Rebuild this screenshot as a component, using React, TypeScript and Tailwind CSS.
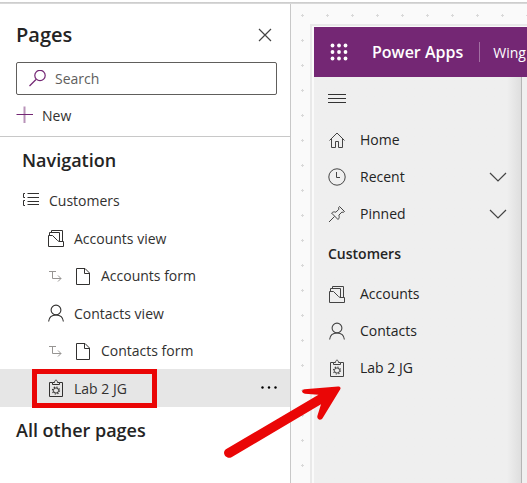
import type { ReactNode } from 'react';

type IconProps = { className?: string };

function Svg({ children, className = '', size = 18 }: { children: ReactNode; className?: string; size?: number }) {
  return (
    <svg
      aria-hidden="true"
      width={size}
      height={size}
      viewBox={`0 0 ${size} ${size}`}
      fill="none"
      stroke="currentColor"
      className={`shrink-0 ${className}`}
    >
      {children}
    </svg>
  );
}

const AccountsIcon = ({ className }: IconProps) => (
  <Svg className={className}>
    <path d="M1.500 17.500V6.500H5.500L10.500 11.500L12 12.500H16.500V17.500Z" />
    <path d="M2.500 6V3.500H12.500V12M4.500 3V1.500H15.500V12" />
  </Svg>
);

const ContactIcon = ({ className }: IconProps) => (
  <Svg className={className}>
    <circle cx="9" cy="6" r="4.9" strokeWidth="1.1" />
    <path d="M1.6 17.5C2 13.5 4.6 11 9 11s7 2.500 7.400 6.500" strokeWidth="1.1" />
  </Svg>
);

const ClipboardIcon = ({ className }: IconProps) => (
  <Svg className={className}>
    <path d="M5.500 3.500H2.500v14h13v-14h-3" />
    <path d="M5.500 3.500v2h7v-2h-2C10.500.4 7.500.4 7.500 3.500Z" />
    <circle cx="9" cy="11.500" r="2.600" />
    <circle cx="9" cy="11.500" r="3.500" strokeWidth="1.200" strokeDasharray="1.200 1.550" />
  </Svg>
);

const PageIcon = ({ className }: IconProps) => (
  <Svg className={className}>
    <path d="M2.500 1.500H11L15.500 6v11.500H2.500Z" />
    <path d="M10.500 1.500V6.500H15.500" />
  </Svg>
);

const BranchIcon = ({ className }: IconProps) => (
  <Svg className={className}>
    <path d="M2 4.500H9M5.500 4.500v7H14M11 8.500l3 3-3 3" />
  </Svg>
);

const GroupIcon = ({ className }: IconProps) => (
  <Svg className={className}>
    <path d="M3 2.500H1.500V6.500H3M3 9.500H1.500V14.500H3M5.500 2.500H17M5.500 6.500H17M5.500 10.500H17M5.500 13.500H17" />
  </Svg>
);

const HomeIcon = ({ className }: IconProps) => (
  <Svg className={className}>
    <path d="M1.500 9.500L9 2l7.500 7.500M3.500 8v8.500h4v-6h3v6h4V8" />
  </Svg>
);

const ClockIcon = ({ className }: IconProps) => (
  <Svg className={className}>
    <circle cx="9" cy="9" r="8.200" />
    <path d="M8.500 4v5.500H12" />
  </Svg>
);

const PinIcon = ({ className }: IconProps) => (
  <Svg className={className}>
    <path d="M11.500 1.500l5 5-1.200.8-1.400-.2-3 3c.6 2 .3 3.200-.9 4.400L3.600 8.100c1.200-1.200 2.400-1.500 4.300-.9l3-3-.3-1.500ZM6.500 11.500L1 17" />
  </Svg>
);

const ChevronIcon = ({ className }: IconProps) => (
  <Svg className={className}>
    <path d="M1 5l8 8 8-8" strokeWidth="1.200" />
  </Svg>
);

type TreeRow = { label: string; kind: 'view' | 'form'; Icon: (p: IconProps) => ReactNode };

const tree: TreeRow[] = [
  { label: 'Accounts view', kind: 'view', Icon: AccountsIcon },
  { label: 'Accounts form', kind: 'form', Icon: PageIcon },
  { label: 'Contacts view', kind: 'view', Icon: ContactIcon },
  { label: 'Contacts form', kind: 'form', Icon: PageIcon },
];

function PagesPanel() {
  return (
    <aside className="flex w-[291px] shrink-0 flex-col border-r border-[#c8c8c8] bg-white text-[#323130]">
      <header className="flex items-center justify-between pt-4 pr-4 pl-4">
        <h1 className="text-[20px] leading-[30px] font-semibold text-[#242424]">Pages</h1>
        <button type="button" aria-label="Close" className="text-[#444]">
          <Svg>
            <path d="M3 3l12 12M15 3L3 15" strokeWidth="1.200" />
          </Svg>
        </button>
      </header>

      <label className="mx-4 mt-3 mr-[13px] flex h-[33px] items-center gap-2 rounded-[2px] border border-[#605e5c] pl-3">
        <Svg className="text-[#742774]">
          <circle cx="11" cy="5.500" r="5.200" strokeWidth="1.200" />
          <path d="M7 9.500L.5 16" strokeWidth="1.200" />
        </Svg>
        <input
          type="text"
          aria-label="Search"
          placeholder="Search"
          className="w-full min-w-0 bg-transparent text-[14px] outline-none placeholder:text-[#605e5c]"
        />
      </label>

      <button type="button" className="mt-2.5 ml-4 flex h-5 items-center gap-2 self-start text-[14px]">
        <Svg className="text-[#742774]">
          <path d="M.5 8.500H17" />
          <path d="M8.500.5V17" strokeWidth="2" opacity=".5" />
        </Svg>
        New
      </button>

      <div className="mt-[11px] border-t border-[#c8c8c8]">
        <h2 className="pt-2 pl-[22px] text-[18px] leading-[30px] font-semibold text-[#242424]">Navigation</h2>
        <ul className="pt-1.5 text-[14px]">
          <li className="flex h-[38px] items-center gap-[9px] pl-[22px]">
            <GroupIcon />
            Customers
          </li>
          {tree.map(({ label, kind, Icon }) =>
            kind === 'view' ? (
              <li key={label} className="flex h-[38px] items-center gap-[9px] pl-[47px]">
                <Icon />
                {label}
              </li>
            ) : (
              <li key={label} className="flex h-[37px] items-center gap-[9px] pl-[47px]">
                <BranchIcon className="text-[#979593]" />
                <Icon />
                {label}
              </li>
            ),
          )}
          <li className="relative flex h-[38px] items-center gap-[9px] bg-[#e6e6e6] pr-3 pl-[47px]">
            <ClipboardIcon />
            Lab 2 JG
            <button type="button" aria-label="More options" className="ml-auto text-black">
              <Svg>
                <g fill="currentColor" stroke="none">
                  <circle cx="2.500" cy="8.500" r="1.200" />
                  <circle cx="9" cy="8.500" r="1.200" />
                  <circle cx="15.500" cy="8.500" r="1.200" />
                </g>
              </Svg>
            </button>
            <span className="pointer-events-none absolute top-0 left-8 h-[39px] w-[125px] border-5 border-[#ea0606]" />
          </li>
        </ul>
      </div>
      <h2 className="pt-2 pl-4 text-[18px] leading-[30px] font-semibold text-[#242424]">All other pages</h2>
    </aside>
  );
}

function NavLink({ label, icon, expandable = false }: { label: string; icon: ReactNode; expandable?: boolean }) {
  return (
    <li>
      <a href="#" className="flex h-[37px] items-center gap-[14px] px-[14px]">
        <span className="text-[#444]">{icon}</span>
        {label}
        {expandable && <ChevronIcon className="ml-auto text-[#444]" />}
      </a>
    </li>
  );
}

function AppPreview() {
  return (
    <main className="relative flex min-w-0 flex-1 overflow-hidden bg-[#fafafa] pt-5 pl-[19px]">
      <svg aria-hidden="true" className="absolute top-0 left-0 h-full w-full" fill="none" stroke="#d9d9d9">
        <defs>
          <pattern id="grid" width="25" height="25" x="-1" y="-1" patternUnits="userSpaceOnUse">
            <path d="M11 12.500h3M12.500 11v3" />
          </pattern>
        </defs>
        <rect width="100%" height="100%" fill="url(#grid)" stroke="none" />
      </svg>
      <div className="relative flex min-w-0 flex-1 flex-col border-t-2 border-l-2 border-[#e9e9e9] bg-[#fafafa] pt-px pl-[2px]">
        <header className="flex h-[50px] shrink-0 items-center overflow-hidden bg-[#742774] whitespace-nowrap text-white">
          <button type="button" aria-label="App launcher" className="mr-6 ml-4">
            <Svg>
              <g fill="currentColor" stroke="none">
                {[2.5, 9, 15.5].map((y) => [2.5, 9, 15.5].map((x) => <circle key={`${x}-${y}`} cx={x} cy={y} r="1.900" />))}
              </g>
            </Svg>
          </button>
          <span className="text-[16px] font-semibold">Power Apps</span>
          <span className="mr-[13px] ml-4 h-5 w-px shrink-0 bg-[#a36fa3]" />
          <span className="text-[14px]">Wing</span>
        </header>
        <div className="flex flex-1">
          <nav className="min-w-0 flex-1 border-r border-[#b5b5b5] bg-[#efefef] bg-linear-to-l from-[#dedede] via-[#efefef] via-[14px] to-[#efefef] text-[14px] text-[#242424]">
            <button type="button" aria-label="Toggle navigation" className="flex h-11 items-center pl-[14px] text-[#333]">
              <Svg>
                <path d="M0 4.500h18M0 8.500h18M0 12.500h18" />
              </Svg>
            </button>
            <ul>
              <NavLink label="Home" icon={<HomeIcon />} />
              <NavLink label="Recent" icon={<ClockIcon />} expandable />
              <NavLink label="Pinned" icon={<PinIcon />} expandable />
            </ul>
            <h2 className="h-[43px] pl-[14px] text-[14px] leading-[43px] font-semibold">Customers</h2>
            <ul>
              <NavLink label="Accounts" icon={<AccountsIcon />} />
              <NavLink label="Contacts" icon={<ContactIcon />} />
              <NavLink label="Lab 2 JG" icon={<ClipboardIcon />} />
            </ul>
          </nav>
          <div className="w-[5px] shrink-0 bg-[#f0f0f0]" />
        </div>
      </div>
    </main>
  );
}

export default function App() {
  return (
    <div className="relative flex min-h-screen flex-col overflow-hidden bg-white font-['Open_Sans','Noto_Sans',sans-serif]">
      <div className="mt-0.5 h-0.5 bg-linear-to-b from-[#c8c8c8] to-[#dddddd]" />
      <div className="flex flex-1">
        <PagesPanel />
        <AppPreview />
      </div>
      <svg
        aria-hidden="true"
        className="pointer-events-none absolute top-[380px] left-[220px]"
        width="124"
        height="84"
        viewBox="220 380 124 84"
        fill="#ea0606"
      >
        <path d="M226.300 449L318.500 394.800 305 393.700C301.500 393.200 301 390 304.500 389.200L338 386.500C340.500 386.500 341.300 388 339.800 390L323 417.500C321 421.500 316.200 419.500 317.500 415.500L321 404.200 231.500 457.300C226 460 221 452.500 226.300 449Z" />
      </svg>
    </div>
  );
}
